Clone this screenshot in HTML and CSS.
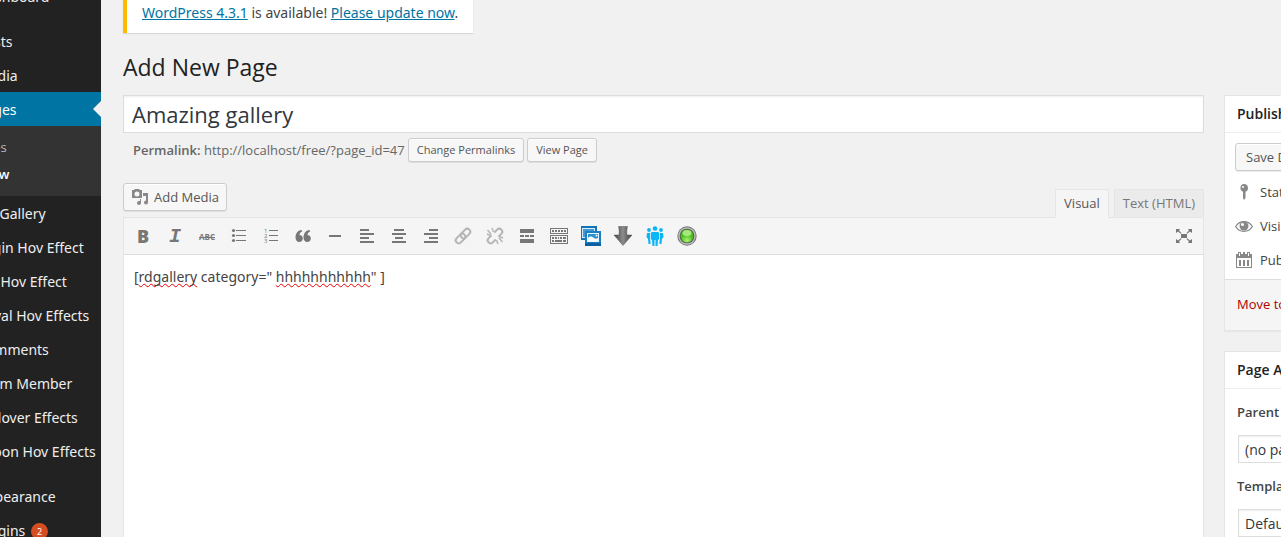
FILE: index.html
```html
<!DOCTYPE html>
<html lang="en">
<head>
    <meta charset="UTF-8">
    <meta name="viewport" content="width=device-width, initial-scale=1.0">
    <title>Add New Page</title>
    <link rel="stylesheet" href="styles.css">
</head>
<body>
    <div class="admin">
        <nav class="admin-menu">
            <ul>
                <li><a href="#">Dashboard</a></li>
                <li class="separator"></li>
                <li><a href="#">Posts</a></li>
                <li><a href="#">Media</a></li>
                <li class="current">
                    <a href="#">Pages</a>
                    <ul class="submenu">
                        <li><a href="#">All Pages</a></li>
                        <li><a href="#" class="active">Add New</a></li>
                    </ul>
                </li>
                <li><a href="#">RD Gallery</a></li>
                <li><a href="#">Login Hov Effect</a></li>
                <li><a href="#">My Hov Effect</a></li>
                <li><a href="#">Royal Hov Effects</a></li>
                <li><a href="#">Comments</a></li>
                <li><a href="#">Team Member</a></li>
                <li><a href="#">Rollover Effects</a></li>
                <li><a href="#">Spoon Hov Effects</a></li>
                <li class="separator"></li>
                <li><a href="#">Appearance</a></li>
                <li><a href="#">Plugins <span class="count">2</span></a></li>
            </ul>
        </nav>

        <main class="content">
            <div class="notice"><a href="#">WordPress 4.3.1</a> is available! <a href="#">Please update now</a>.</div>
            <h1>Add New Page</h1>

            <div class="columns">
                <div class="post-body">
                    <input type="text" class="title" aria-label="Title" value="Amazing gallery">
                    <div class="permalink">
                        <span><strong>Permalink:</strong> http://localhost/free/?page_id=47</span>
                        <button type="button" class="button small">Change Permalinks</button>
                        <button type="button" class="button small">View Page</button>
                    </div>

                    <div class="editor-tools">
                        <button type="button" class="button media">
                            <svg width="18" height="18" viewBox="0 0 18 18" fill="#888">
                                <path fill-rule="evenodd" d="M1 2h2l1-1h4l1 1h2v8H1zM6 3.500a2.500 2.500 0 1 0 0 5 2.500 2.500 0 0 0 0-5z"/>
                                <path d="M12 5h5v9.500a2 2 0 1 1-2-2V8h-3zM10 11v4a2 2 0 1 1-2-2h1v-2z"/>
                            </svg>
                            Add Media
                        </button>
                        <div class="tabs">
                            <button type="button" class="tab selected">Visual</button>
                            <button type="button" class="tab">Text (HTML)</button>
                        </div>
                    </div>

                    <div class="editor">
                        <div class="toolbar">
                            <button type="button" class="tool bold" aria-label="Bold">B</button>
                            <button type="button" class="tool italic" aria-label="Italic">I</button>
                            <button type="button" class="tool strike" aria-label="Strikethrough">ABC</button>
                            <button type="button" class="tool" aria-label="Bulleted list">
                                <svg width="20" height="20" viewBox="0 0 20 20"><path d="M7 4h10v1H7zM7 9h10v1H7zM7 14h10v1H7z"/><circle cx="4.500" cy="4.500" r="1.600"/><circle cx="4.500" cy="9.500" r="1.600"/><circle cx="4.500" cy="14.500" r="1.600"/></svg>
                            </button>
                            <button type="button" class="tool" aria-label="Numbered list">
                                <svg width="20" height="20" viewBox="0 0 20 20"><path d="M8 4h9v1H8zM8 9h9v1H8zM8 14h9v1H8z"/><g font-size="6"><text x="3" y="7">1</text><text x="3" y="12">2</text><text x="3" y="17">3</text></g></svg>
                            </button>
                            <button type="button" class="tool" aria-label="Blockquote">
                                <svg width="20" height="20" viewBox="0 0 20 20"><path id="quote" d="M8.500 4C4.500 4.500 2.500 7.500 2.500 11.500c0 2.700 1.500 4.500 3.700 4.500s3.600-1.600 3.600-3.600c0-2.100-1.400-3.400-3.300-3.400C6.500 7.500 7.300 6 9.300 5.500z"/><use href="#quote" x="8"/></svg>
                            </button>
                            <button type="button" class="tool" aria-label="Horizontal line">
                                <svg width="20" height="20" viewBox="0 0 20 20"><path d="M4 9h12v2H4z"/></svg>
                            </button>
                            <button type="button" class="tool" aria-label="Align left">
                                <svg width="20" height="20" viewBox="0 0 20 20"><path d="M3 3h9v2H3zM3 7h14v2H3zM3 11h9v2H3zM3 15h14v2H3z"/></svg>
                            </button>
                            <button type="button" class="tool" aria-label="Align center">
                                <svg width="20" height="20" viewBox="0 0 20 20"><path d="M5 3h10v2H5zM3 7h14v2H3zM6 11h8v2H6zM3 15h14v2H3z"/></svg>
                            </button>
                            <button type="button" class="tool" aria-label="Align right">
                                <svg width="20" height="20" viewBox="0 0 20 20"><path d="M8 3h9v2H8zM3 7h14v2H3zM8 11h9v2H8zM3 15h14v2H3z"/></svg>
                            </button>
                            <button type="button" class="tool" aria-label="Insert link" disabled>
                                <svg width="20" height="20" viewBox="0 0 20 20" class="line"><g transform="rotate(-45 10 10)"><rect x="1" y="7" width="11" height="6" rx="3"/><rect x="8" y="7" width="11" height="6" rx="3"/></g></svg>
                            </button>
                            <button type="button" class="tool" aria-label="Remove link" disabled>
                                <svg width="20" height="20" viewBox="0 0 20 20" class="line"><g transform="rotate(-45 10 10)"><path d="M8 7H4a3 3 0 0 0 0 6h4M12 7h4a3 3 0 0 1 0 6h-4"/></g><path stroke-width="1.400" d="M8.500 6 7 2M6 8 2.500 4M6 9.500 2 8M11.500 14l1.500 4M14 12l3.500 4M14 10.500l4 1.500"/></svg>
                            </button>
                            <button type="button" class="tool" aria-label="Read more">
                                <svg width="20" height="20" viewBox="0 0 20 20"><path d="M3 3h14v4H3zM3 9h4v2H3zM8 9h4v2H8zM13 9h4v2h-4zM3 13h14v4H3z"/></svg>
                            </button>
                            <button type="button" class="tool" aria-label="Toolbar toggle">
                                <svg width="20" height="20" viewBox="0 0 20 20"><path fill-rule="evenodd" d="M1 2h18v6H1zM2 3v4h16V3zM1 9h18v9H1zM2 10v7h16v-7z"/><path d="M3 4h2v2H3zM6 4h2v2H6zM9 4h2v2H9zM12 4h2v2h-2zM15 4h2v2h-2zM3 11h2v2H3zM6 11h2v2H6zM9 11h1v2H9zM11 11h2v2h-2zM14 11h3v2h-3zM3 14h2v2H3zM6 14h7v2H6zM14 14h3v2h-3z"/></svg>
                            </button>
                            <button type="button" class="tool" aria-label="Gallery">
                                <svg width="20" height="20" viewBox="0 0 20 20"><path fill="#1274b8" d="M0 0h16v14H0z"/><path fill="#d8edf9" d="M1 2h13v10H1z"/><path fill="#3f9ad6" d="M2 3h11v8H2z"/><path fill="#1b7fc4" d="M4 5h16v15H4z"/><path fill="#0d5f9f" d="M4 17h16v3H4z"/><path fill="#e6f4fc" d="M6 7h12v9H6z"/><path fill="#2b90d4" d="M7 8h10v7H7z"/><path fill="#fff" d="M7 12c3-3 5-1 6 0s2 1 4 0v3H7z"/><circle cx="15.500" cy="9.500" r="1" fill="#fff"/></svg>
                            </button>
                            <button type="button" class="tool" aria-label="Download">
                                <svg width="20" height="20" viewBox="0 0 20 20"><defs><linearGradient id="steel"><stop stop-color="#444"/><stop offset=".5" stop-color="#8c8c8c"/><stop offset="1" stop-color="#3c3c3c"/></linearGradient></defs><path fill="url(#steel)" stroke="#555" stroke-width=".5" d="M5.500.5h9c-.8 3-.8 6-.5 8.500h5L10 19.500 1 9h5c.3-2.500.3-5.500-.5-8.500z"/></svg>
                            </button>
                            <button type="button" class="tool" aria-label="Team">
                                <svg width="20" height="20" viewBox="0 0 20 20"><g fill="#0cb5f5"><circle cx="4" cy="4" r="1.900"/><circle cx="16" cy="4" r="1.900"/><circle cx="10" cy="2.500" r="2.300"/><path d="M2 7h3.500v11h-2L3 13 1.500 11zM18 7h-3.500v11h2l.5-5 1.500-2zM7 6h6l1.500 1v6l-1.500 1-.5 6h-2v-6h-1v6h-2L7 14l-1.500-1V7z"/></g><path fill="none" stroke="#f5f5f5" stroke-width=".8" d="M5.500 7v7l1 1v4M14.500 7v7l-1 1v4"/></svg>
                            </button>
                            <button type="button" class="tool" aria-label="Status">
                                <svg width="20" height="20" viewBox="0 0 20 20"><defs><radialGradient id="green" cy=".85"><stop stop-color="#a9f56f"/><stop offset="1" stop-color="#49b91c"/></radialGradient></defs><circle cx="10" cy="10" r="9.700" fill="#777"/><circle cx="10" cy="10" r="8.700" fill="#bbb"/><circle cx="10" cy="10" r="7.300" fill="#4c5549"/><circle cx="10" cy="10" r="6.500" fill="url(#green)"/><ellipse cx="10" cy="7" rx="4.500" ry="3" fill="#b8f595" opacity=".8"/></svg>
                            </button>
                            <button type="button" class="tool fullscreen" aria-label="Fullscreen">
                                <svg width="20" height="20" viewBox="0 0 20 20"><path d="M7 8h6v4H7zM2 3h4L5 4.500 7.500 7l-.7.700L4 5.500 2 7zM18 3h-4l1 1.500L12.500 7l.7.700L16 5.500 18 7zM2 17h4l-1-1.500L7.500 13l-.7-.7L4 14.500 2 13zM18 17h-4l1-1.500-2.500-2.500.7-.7 2.800 2.200L18 13z"/></svg>
                            </button>
                        </div>
                        <div class="editor-body" role="textbox" aria-label="Page content" contenteditable="true" spellcheck="false">[<span class="misspelled">rdgallery</span> category=" <span class="misspelled">hhhhhhhhhhh</span>" ]</div>
                    </div>
                </div>

                <aside class="side">
                    <section class="box">
                        <h2>Publish</h2>
                        <div class="publish">
                            <button type="button" class="button">Save Draft</button>
                            <div class="misc">
                                <svg width="18" height="20" viewBox="0 0 18 20"><path fill-rule="evenodd" d="M9 2a4 4 0 0 1 1.500 7.700V16L9 18l-1-2V9.700A4 4 0 0 1 9 2zM8 4a1 1 0 1 0 0 2 1 1 0 0 0 0-2z"/></svg>
                                Status: Draft
                            </div>
                            <div class="misc">
                                <svg width="18" height="20" viewBox="0 0 18 20"><path fill="none" stroke="#888" stroke-width="1.300" d="M.7 10.500C4.500 4 13.500 4 17.300 10.500 13.500 17 4.500 17 .7 10.500z"/><circle cx="9" cy="10" r="4.500"/><circle cx="7.500" cy="8.500" r="1.500" fill="#fff"/></svg>
                                Visibility: Public
                            </div>
                            <div class="misc">
                                <svg width="18" height="20" viewBox="0 0 18 20"><path fill-rule="evenodd" d="M1 4h2V2h3v2h2V2h2v2h2V2h3v2h2v14H1zM2 8v9h14V8zM4 3v3h1V3zM13 3v3h1V3z"/><path d="M4 10h2v6H4zM8 10h2v6H8zM12 10h2v6h-2z"/></svg>
                                Publish immediately
                            </div>
                        </div>
                        <div class="trash"><a href="#">Move to Trash</a></div>
                    </section>

                    <section class="box">
                        <h2>Page Attributes</h2>
                        <div class="attributes">
                            <label for="parent">Parent</label>
                            <select id="parent"><option>(no parent)</option></select>
                            <label for="template">Template</label>
                            <select id="template"><option>Default Template</option></select>
                        </div>
                    </section>
                </aside>
            </div>
        </main>
    </div>
</body>
</html>
```
FILE: styles.css
```css
* {
    box-sizing: border-box;
}
body {
    margin: 0;
    height: 100vh;
    overflow: hidden;
    background-color: #f1f1f1;
    color: #444;
    font-family: "Open Sans", sans-serif;
    font-size: 13px;
}
button, input, select {
    font-family: inherit;
}
/* the screen is scrolled a little to the right and down */
.admin {
    display: flex;
    margin: -21px -243px 0 -59px;
}
.admin-menu {
    flex: 0 0 160px;
    background-color: #222;
}
.admin-menu ul {
    list-style: none;
    margin: 0;
    padding: 0;
}
.admin-menu a {
    display: block;
    height: 34px;
    padding-left: 36px;
    line-height: 36px;
    font-family: "Noto Sans", sans-serif;
    font-size: 14px;
    color: #eee;
    text-decoration: none;
    white-space: nowrap;
}
.separator {
    height: 11px;
}
.current > a {
    position: relative;
    background-color: #0074a2;
    color: #fff;
}
.current > a::after {
    content: "";
    position: absolute;
    right: 0;
    top: 9px;
    border: 8px solid transparent;
    border-left: 0;
    border-right-color: #f1f1f1;
}
.admin-menu .submenu {
    padding: 8px 0;
    background-color: #333;
}
.admin-menu .submenu a {
    height: 27px;
    padding-left: 12px;
    line-height: 27px;
    font-family: "Open Sans", sans-serif;
    font-size: 13px;
    color: #bbb;
}
.admin-menu .submenu .active {
    color: #fff;
    font-weight: 600;
}
.count {
    display: inline-block;
    width: 17px;
    height: 17px;
    margin-left: 2px;
    border-radius: 50%;
    background-color: #d54e21;
    color: #fff;
    font-size: 9px;
    line-height: 17px;
    text-align: center;
    vertical-align: 1px;
}
.content {
    flex: 1;
    min-width: 0;
    padding: 14px 20px 0 22px;
}
.notice {
    width: fit-content;
    padding: 10px 15px;
    border-left: 4px solid #ffba00;
    background-color: #fff;
    box-shadow: 0 1px 1px rgba(0, 0, 0, 0.1);
    font-family: "Noto Sans", sans-serif;
    font-size: 14px;
    line-height: 20px;
}
.notice a {
    color: #0074a2;
}
h1 {
    margin: 18px 0 12px;
    color: #222;
    font-size: 23px;
    font-weight: 400;
    line-height: 32px;
}
.columns {
    display: flex;
    align-items: flex-start;
    gap: 20px;
}
.post-body {
    flex: 1;
    min-width: 0;
}
.title {
    display: block;
    width: 100%;
    height: 38px;
    padding: 3px 8px;
    border: 1px solid #ddd;
    background-color: #fff;
    box-shadow: inset 0 1px 2px rgba(0, 0, 0, 0.07);
    color: #32373c;
    font-size: 22px;
}
.permalink {
    display: flex;
    align-items: center;
    gap: 3px;
    padding: 5px 10px 0;
    color: #666;
}
.permalink strong {
    font-weight: 600;
}
.button {
    height: 28px;
    padding: 0 10px;
    border: 1px solid #ccc;
    border-radius: 3px;
    background-color: #f7f7f7;
    box-shadow: inset 0 1px 0 #fff, 0 1px 0 rgba(0, 0, 0, 0.08);
    color: #555;
    font-size: 13px;
}
.button.small {
    height: 24px;
    padding: 0 8px 2px;
    font-size: 11px;
}
.button.media {
    display: flex;
    align-items: center;
    gap: 5px;
    padding: 0 7px;
}
.editor-tools {
    display: flex;
    justify-content: space-between;
    align-items: flex-end;
    margin-top: 21px;
}
.editor-tools .media {
    margin-bottom: 6px;
}
.tabs {
    display: flex;
    gap: 5px;
}
.tab {
    height: 28px;
    padding: 0 8px 1px;
    border: 1px solid #e5e5e5;
    border-bottom: 0;
    background-color: #ebebeb;
    color: #777;
    font-size: 13px;
}
.tab.selected {
    height: 29px;
    margin-bottom: -1px;
    padding-bottom: 2px;
    z-index: 1;
    background-color: #f5f5f5;
    color: #555;
}
.editor {
    border: 1px solid #e5e5e5;
    background-color: #fff;
}
.toolbar {
    display: flex;
    align-items: center;
    gap: 8px;
    height: 37px;
    padding: 0 7px;
    border-bottom: 1px solid #ddd;
    background-color: #f5f5f5;
}
.tool {
    display: flex;
    align-items: center;
    justify-content: center;
    width: 24px;
    height: 24px;
    padding: 0;
    border: 0;
    background: none;
    color: #777;
    fill: #777;
    stroke: none;
}
.tool:disabled {
    opacity: 0.5;
}
.tool .line {
    fill: none;
    stroke: #777;
    stroke-width: 2;
}
.bold {
    font-size: 18px;
    font-weight: 800;
}
.italic {
    font-family: "Liberation Mono", monospace;
    font-size: 20px;
    font-style: italic;
    font-weight: 700;
}
.strike {
    font-size: 8px;
    font-weight: 700;
    text-decoration: line-through;
}
.fullscreen {
    margin-left: auto;
}
.editor-body {
    min-height: 300px;
    padding: 12px 10px;
    color: #444;
    font-family: "Noto Sans", sans-serif;
    font-size: 14px;
    line-height: 20px;
    outline: 0;
}
.misspelled {
    text-decoration: underline wavy #e00 1px;
    text-decoration-skip-ink: none;
}
.side {
    flex: 0 0 280px;
}
.box {
    margin-bottom: 20px;
    border: 1px solid #e5e5e5;
    background-color: #fff;
    box-shadow: 0 1px 1px rgba(0, 0, 0, 0.04);
}
.box h2 {
    margin: 0;
    padding: 8px 12px;
    border-bottom: 1px solid #eee;
    color: #222;
    font-size: 14px;
    font-weight: 600;
    line-height: 20px;
}
.publish {
    padding: 10px 10px 2px;
}
.misc {
    display: flex;
    align-items: center;
    gap: 7px;
    height: 34px;
    fill: #888;
}
.publish .button {
    display: block;
    margin-bottom: 4px;
}
.trash {
    padding: 14px 12px 16px;
    border-top: 1px solid #ddd;
    background-color: #f5f5f5;
    line-height: 20px;
}
.trash a {
    color: #a00;
    text-decoration: none;
}
.attributes {
    padding: 13px 12px;
}
.attributes label {
    display: block;
    font-weight: 600;
    line-height: 20px;
}
.attributes select {
    display: block;
    height: 28px;
    margin: 13px 1px;
    padding: 0 2px;
    border: 1px solid #ddd;
    background-color: #fff;
    box-shadow: inset 0 1px 2px rgba(0, 0, 0, 0.07);
    color: #32373c;
    font-size: 14px;
}
```
